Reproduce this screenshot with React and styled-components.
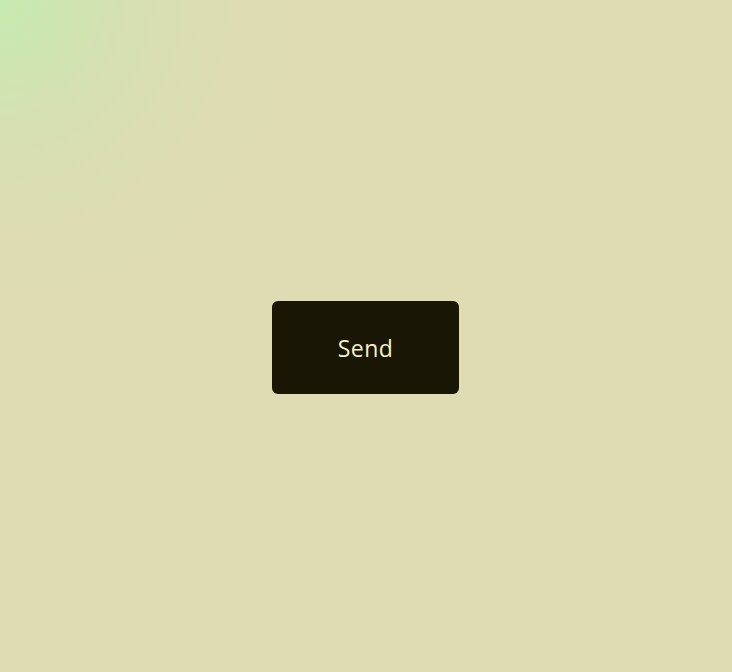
import styled, { createGlobalStyle } from "styled-components";

const GlobalStyle = createGlobalStyle`
  html, body {
    margin: 0;
    padding: 0;
  }
  body {
    font-family: "Open Sans", "Liberation Sans", sans-serif;
  }
`;

const Page = styled.main`
  width: 732px;
  height: 672px;
  display: flex;
  align-items: center;
  justify-content: center;
  padding-right: 1px;
  padding-top: 23px;
  box-sizing: border-box;
  background:
    radial-gradient(circle at 0 0, #c6eab0 0px, rgba(210, 226, 178, 0.75) 120px, rgba(218, 222, 178, 0.3) 240px, rgba(222, 220, 178, 0) 400px),
    #dfdbb2;
`;

const SendButton = styled.button`
  width: 187px;
  height: 93px;
  border: none;
  border-radius: 6px;
  background-color: #1a1606;
  color: #f4f1c6;
  font-family: "Open Sans", "Liberation Sans", sans-serif;
  font-size: 23px;
  font-weight: 400;
  letter-spacing: 0.4px;
  cursor: pointer;
`;

const App = () => {
  return (
    <>
      <GlobalStyle />
      <Page>
        <SendButton type="button">Send</SendButton>
      </Page>
    </>
  );
};

export default App;
